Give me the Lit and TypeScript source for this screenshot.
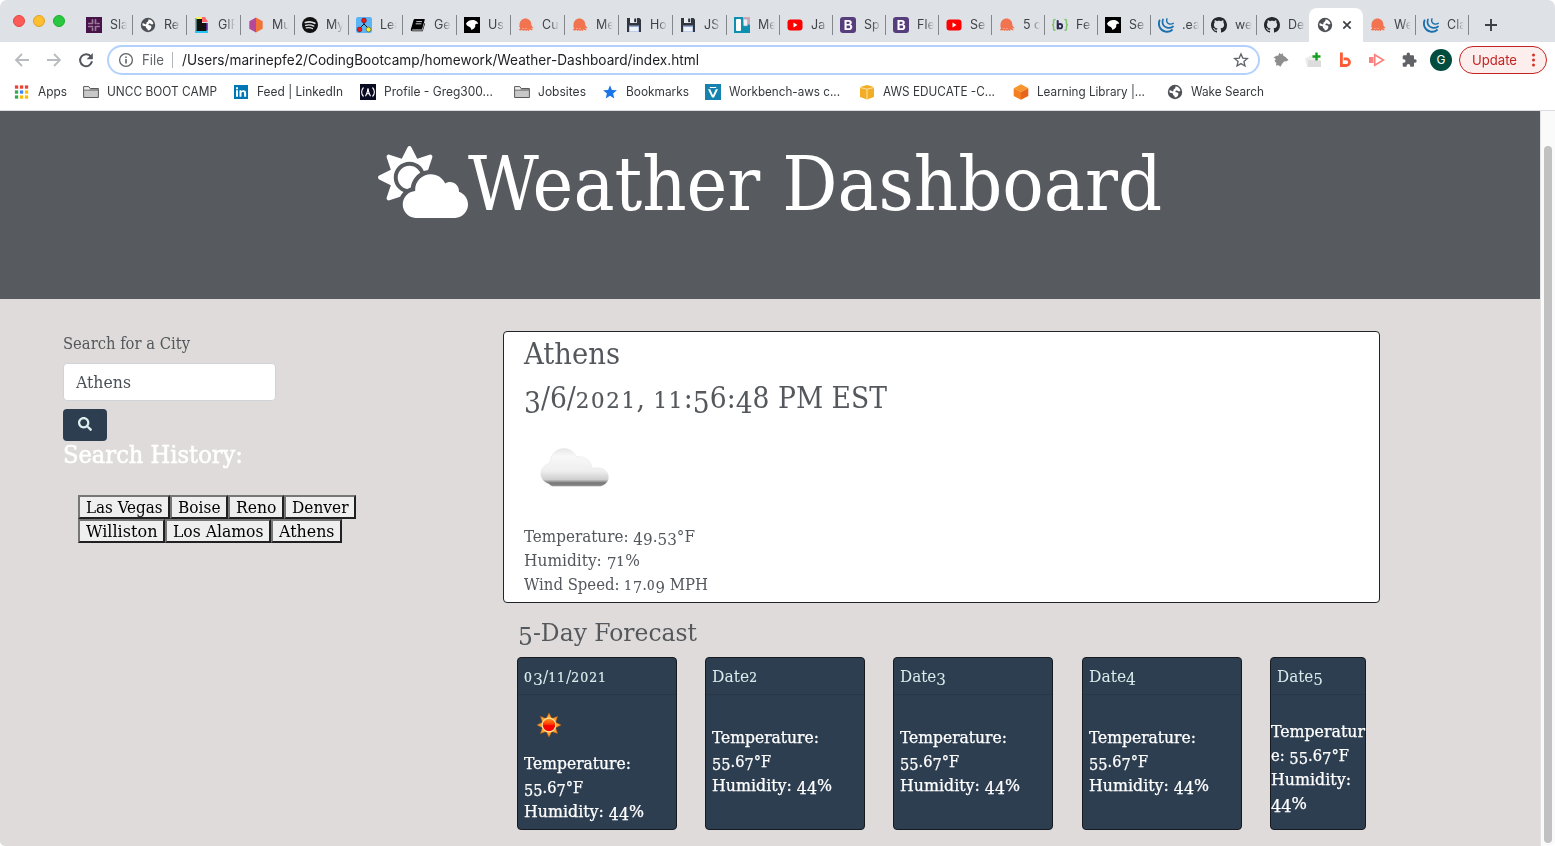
import { LitElement, html, svg, css } from "lit";
import { customElement, property } from "lit/decorators.js";

/** One line of text condensed or widened horizontally to an exact width. */
@customElement("fit-text")
class FitText extends LitElement {
  @property() text = "";
  @property({ type: Number }) w = 0;
  @property({ type: Boolean }) oldstyle = false;
  static styles = css`
    :host { display: block; white-space: pre; flex: none; }
    .run { display: inline-block; transform-origin: 0 50%; }
    .low { vertical-align: -0.18em; line-height: 0; }
    .short { font-size: 0.8em; line-height: 0; letter-spacing: 0.07em; -webkit-text-stroke: 0.2px currentColor; }
  `;
  render() {
    // old-style figures: 3 4 5 7 9 hang below the baseline, 0 1 2 stay at x-height
    const parts = this.oldstyle ? this.text.split(/([34579]+|[012]+)/).filter(Boolean) : [this.text];
    return html`<span class="run">${parts.map((p) =>
      this.oldstyle && /^[34579]/.test(p) ? html`<span class="low">${p}</span>`
        : this.oldstyle && /^[012]/.test(p) ? html`<span class="short">${p}</span>` : p)}</span>`;
  }
  updated() {
    const s = this.renderRoot.querySelector(".run") as HTMLElement;
    this.style.width = this.w + "px";
    s.style.transform = "";
    const natural = s.getBoundingClientRect().width;
    if (natural) s.style.transform = `scaleX(${this.w / natural})`;
  }
}

const line = (text: string, w: number, cls = "") =>
  html`<fit-text class=${cls} .text=${text} .w=${w}></fit-text>`;
const serif = (text: string, w: number, cls = "") =>
  html`<fit-text class=${cls} .text=${text} .w=${w} .oldstyle=${true}></fit-text>`;

const icons: Record<string, any> = {
  slack: svg`<path fill="#481349" d="M0 0h16v16H0z"/><g stroke="#9a7a9b" stroke-width="1.700" stroke-linecap="round" fill="none"><path d="M6.500 2.800v3.600M2.800 6.500h3M9.500 2.800v3.600M11.300 6.500h1.700M2.800 9.500h3.800M6.500 11.300v1.900M9.500 9.600v3.600M10.500 9.500h2.700"/></g>`,
  globe: svg`<circle cx="8" cy="8" r="7.2" fill="#4d5156"/><path fill="#fff" d="M8.300 2.600c2.400-.4 4.600 1.500 5.100 4.200-1 1-1.900.8-2.600.2-.8-.7-1.800-.5-2.200-.1-.6.6 0 1.200.8 1.300 1.300.1 2.200.7 2 2-.3 1.700-1.600 3.100-3.700 3.400l-.2-1.800c-1.300-.2-1.700-1.100-1.500-2.200L2.500 8.500c-.2-.8 0-1.700.3-2.400l2.500 1.200c1 .3 1.400-.3 1.100-1.100-.2-.7.3-1.100 1-1.300.9-.2 1.200-1.300.9-2.300z"/>`,
  gif: svg`<path fill="#fff35c" d="M1 0h6v3H1z"/><path fill="#ff6666" d="M8 0h3l3 5H8z"/><path fill="#3fd6a0" d="M1 1h1.500v13H1z"/><path fill="#9933ff" d="M12 6h2v8h-2z"/><path fill="#28c4f4" d="M1 13h13v3H1z"/><path fill="#121212" d="M2.500 2H8v4h4.500v8h-10z"/>`,
  hex: svg`<path fill="#b5489b" d="M8 .5v15L1.300 11.800V4.200z"/><path fill="#f0743a" d="M8 .5v15l6.700-3.700V4.200z"/>`,
  spotify: svg`<circle cx="8" cy="8" r="8" fill="#111"/><g stroke="#dee1e6" fill="none" stroke-linecap="round"><path stroke-width="1.700" d="M3.300 5.500c3.200-1 6.800-.7 9.500.8"/><path stroke-width="1.400" d="M3.700 8.300c2.800-.8 5.600-.5 8 .8"/><path stroke-width="1.200" d="M4.200 10.900c2.200-.6 4.400-.4 6.300.7"/></g>`,
  tree: svg`<rect width="16" height="16" rx="2" fill="#5bb4f5"/><path d="M8 3v5M8 7l-5 5M8 7l5 5" stroke="#111" stroke-width="1" fill="none"/><circle cx="8" cy="3.500" r="2.400" fill="#f01818" stroke="#511" stroke-width=".5"/><circle cx="3.500" cy="12.500" r="2.400" fill="#f01818" stroke="#511" stroke-width=".5"/><circle cx="12.500" cy="12.500" r="2.400" fill="#f6f01c" stroke="#333" stroke-width=".5"/>`,
  book: svg`<path fill="#000" d="M5 2h9c.6 0 .8.4.7.9L12 12.500H2.500c-.7 0-.7.9 0 .9h9.900l2.100-7.500.6.500-2.400 7.800H2.500c-1.500 0-2-1.200-1.500-2.500L3.500 3.200C3.800 2.400 4.200 2 5 2z"/><path d="M6.300 4.600h5.700M5.700 6.800h5.700" stroke="#dee1e6" stroke-width=".9"/>`,
  bird: svg`<path d="M0 0h16v16H0z"/><path fill="#fff" d="M2 6.500C3.500 4 6 3 8.500 3c3 0 5.500 1.800 5.700 4-1.700-.4-2.700 0-3 1 .4 1.300-.2 2.300-1.200 3.500L7.500 13c-.4-1.500-1-2.700-2.300-3.300C4 9.300 2.500 8.500 2 6.500z"/>`,
  octo: svg`<path fill="#f2734f" d="M1.500 8C1.500 4 4.200 1.500 7.500 1.500S13.200 4 13.300 7.500c.2 1.800 1.500 2.300 2.200 3.500-1 .6-2 0-2.300-.6.1 1.200 1 1.600 1.600 2.500-1.600.8-2.800-.2-3.300-1 0 1-.3 1.600-1 2l-1.200-.8-1.200.9-1.200-.9-1.300.9-1-.9c-1.500.8-3.200.5-4-.7 1-.1 1.500-.7 1.600-1.500C1.300 10.500 1.500 9 1.500 8z"/><path stroke="#fae1d8" stroke-width=".8" d="M4.500 11.500h1M7.500 11.500h1"/>`,
  disk: svg`<path fill="#32373f" d="M1 1h12.500L15 2.500V15H1z"/><path fill="#e8ebef" d="M4 1h7v5H4z"/><path fill="#222c3c" d="M8.200 1.500h2v3.700h-2z"/><path fill="#93a9d8" d="M3 8.500h10V15H3z"/><path fill="#edf1f8" d="M3.500 10h9v4.500h-9z"/>`,
  trello: svg`<path fill="#0e8fb0" d="M0 0h16v16H0z"/><path fill="#d7a7b3" d="M9 0h7v8L9 5z"/><rect x="2" y="2" width="5" height="12" rx="1" fill="#fff"/><rect x="9.300" y="2" width="4.500" height="7" rx="1" fill="#f0eef2" stroke="#68a4bb" stroke-width=".6"/>`,
  youtube: svg`<rect x=".5" y="2.500" width="15" height="11" rx="3" fill="#f00"/><path fill="#fff" d="M6.500 5.500v5L10.500 8z"/>`,
  boot: svg`<rect width="16" height="16" rx="3" fill="#563d7c"/><path fill="#fff" fill-rule="evenodd" d="M4.500 3h4.300c1.900 0 3 .9 3 2.400 0 1-.6 1.800-1.500 2.100 1.200.2 2 1.100 2 2.400 0 1.900-1.300 3.100-3.400 3.100H4.500zM6.600 4.700v2.200h1.600c1 0 1.500-.4 1.500-1.100s-.5-1.100-1.400-1.100zm0 3.700v2.900h1.900c1.100 0 1.700-.5 1.700-1.500 0-.9-.6-1.400-1.700-1.400z"/>`,
  brace: svg`<g fill="none" stroke-linecap="round"><path stroke="#7cc36a" stroke-width="1.500" d="M3 2.500c-3 0 0 4.500-2.400 5.300C3 8.600 0 13.300 3 13.300M13 2.500c3 0 0 4.500 2.400 5.300C13 8.600 16 13.300 13 13.300"/><path stroke="#2b2b50" stroke-width="2" d="M5.700 4v7.500"/><circle cx="8" cy="9.200" r="2.200" stroke="#2b2b50" stroke-width="1.800"/></g>`,
  jquery: svg`<g fill="none" stroke="#1b6fad" stroke-linecap="round"><path stroke-width="1.900" d="M1.500 3.500C-.2 8 2 13.500 7.500 14.600c2.700.5 5-.3 6.500-1.600"/><path stroke-width="1.700" d="M5 2.500c-1.400 3.500.3 7.300 4 8.200 2.500.6 4.600 0 6-1.200"/><path stroke-width="1.400" d="M9 1.800c-.9 2.300 0 4.600 2.400 5.200 1.600.4 2.800.1 3.900-.7"/></g>`,
  github: svg`<path fill="#24292e" d="M8 0C3.580 0 0 3.580 0 8c0 3.540 2.290 6.530 5.470 7.590.4.070.55-.17.55-.38 0-.19-.01-.82-.01-1.490-2.010.37-2.530-.49-2.690-.94-.09-.23-.48-.94-.82-1.130-.28-.15-.68-.52-.01-.53.63-.01 1.080.58 1.230.82.72 1.210 1.870.87 2.330.66.07-.52.28-.87.51-1.070-1.780-.2-3.640-.89-3.640-3.950 0-.87.31-1.590.82-2.150-.08-.2-.36-1.020.08-2.120 0 0 .67-.21 2.200.82.64-.18 1.320-.27 2-.27s1.360.09 2 .27c1.530-1.040 2.200-.82 2.200-.82.44 1.100.16 1.920.08 2.120.51.56.82 1.270.82 2.150 0 3.070-1.870 3.750-3.650 3.950.29.25.54.73.54 1.480 0 1.070-.01 1.930-.01 2.200 0 .21.15.46.55.38A8.010 8.010 0 0 0 16 8c0-4.420-3.580-8-8-8z"/>`,
  apps: svg`${[0, 1, 2].map((r) => [0, 1, 2].map((c) => svg`<rect x=${0.9 + c * 5} y=${1.4 + r * 5} width="3.300" height="3.300" fill=${[["#ea4335", "#ea4335", "#ea4335"], ["#34a853", "#4285f4", "#fbbc04"], ["#34a853", "#fbbc04", "#fbbc04"]][r][c]}/>`))}`,
  folder: svg`<path d="M.6 13.500V2.600h5.200l1.500 1.900h8.100v9z" fill="#c8c8c8" stroke="#5a5a5a"/><path d="M1 6h14" stroke="#5a5a5a"/><path d="M1.200 3.200h4.300L6.700 5.400H1.200z" fill="#eee"/>`,
  linkedin: svg`<rect x="1" y="1" width="14" height="14" fill="#0077b5"/><path fill="#fff" d="M3 6.300h2v6.500H3zM3 3.200h2v2H3zM6.500 6.300h1.900v.9c1-1.600 4.700-1.500 4.700 1.500v4.100h-2V9.300c0-1.900-2.600-1.700-2.600 0v3.500h-2z"/>`,
  fcc: svg`<path fill="#0a0a23" d="M0 0h16v16H0z"/><g stroke="#fff" fill="none" stroke-width="1.100"><path d="M3.500 3.500C1 6 1 10 3.500 12.500M12.500 3.500c2.500 2.500 2.500 6.500 0 9M5.500 12.300c1.200-2 2.200-4.500 2.500-8 .3 3.500 1.300 6 2.500 8M6.500 9.800h3"/></g>`,
  star: svg`<path fill="#1a73e8" d="M8 1.200l1.900 4.700 5 .4-3.800 3.200 1.200 4.900L8 11.700l-4.300 2.700 1.200-4.900L1.100 6.300l5-.4z"/>`,
  vee: svg`<path fill="#1583ad" d="M0 0h16v16H0z"/><path fill="#fff" d="M3 5.200h2.200L8 11.200l2.800-6H13l-4 8.300H7zM4.800 3h6.400v.9H4.800z"/>`,
  awsbox: svg`<path fill="#f3ad25" d="M1 3l7-2 7 2v10l-7 2.500L1 13z"/><path stroke="#fbe3ae" fill="none" d="M1 3.500l7 1.700 7-1.700M8 5.200v10"/>`,
  cube: svg`<path fill="#f8962c" d="M8 .3l7.300 3.900L8 8 .7 4.200z"/><path fill="#f57f20" d="M.7 4.200L8 8v7.800L.7 12z"/><path fill="#e8641b" d="M15.300 4.200L8 8v7.800l7.300-3.800z"/>`,
  back: svg`<path d="M15 8H2M8 2L2 8l6 6" fill="none" stroke="#b9bbbe" stroke-width="1.800"/>`,
  fwd: svg`<path d="M1 8h13M8 2l6 6-6 6" fill="none" stroke="#b9bbbe" stroke-width="1.800"/>`,
  reload: svg`<path d="M13 4.700A6 6 0 1 0 14 9.300" fill="none" stroke="#54585d" stroke-width="2"/><path d="M14.800 1v6.200H8.600z" fill="#54585d"/>`,
  info: svg`<circle cx="8" cy="8" r="6.400" fill="none" stroke="#5f6368" stroke-width="1.300"/><path fill="#5f6368" d="M7.200 7h1.600v4.600H7.200zM7.200 4.400h1.600V6H7.200z"/>`,
  starline: svg`<path fill="none" stroke="#5f6368" stroke-width="1.300" d="M8 1.900l1.800 4.200 4.600.4-3.500 3 1.100 4.500L8 11.600 4 14l1.100-4.500-3.500-3 4.600-.4z"/>`,
  wolf: svg`<path fill="#8e8e8e" d="M.5 5.500L4 3.500l1 .5L6.500.8 8 2.500 9.500 1l.8 2.700L12.500 5l3 3-2 1.200-2.500.3L9 12l-1.500 2.800-2-1.600L3 13.500l.3-2.500L1.500 9l1.300-2z"/>`,
  plusdoc: svg`<path fill="#ececec" d="M0 6.500l7-3.500 9 5v7H2z"/><path fill="#d6d6d6" d="M3 8l13 1v6H3z" opacity=".7"/><path stroke="#15a01d" stroke-width="2.400" d="M11.500.5v8M7.500 4.500h8"/>`,
  bee: svg`<path fill="none" stroke="#fa5c35" stroke-width="2.800" d="M4.400.5v13h4.800a3.300 3.300 0 0 0 0-6.600H6.600"/>`,
  play: svg`<path fill="#fb8080" d="M0 5h4.500v6H0z"/><path fill="none" stroke="#fb8080" stroke-width="1.700" d="M5.700 2.800L14.500 8l-8.800 5.200z"/>`,
  puzzle: svg`<path fill="#5f6368" d="M14 7.300h-1V4.600c0-.8-.6-1.300-1.300-1.300H9V2.300a1.700 1.700 0 0 0-3.400 0v1H3c-.8 0-1.300.6-1.300 1.300v2.600h1a1.800 1.800 0 0 1 0 3.600h-1v2.600c0 .8.6 1.300 1.300 1.300h2.600v-1a1.800 1.800 0 0 1 3.600 0v1h2.500c.8 0 1.300-.6 1.300-1.300v-2.700h1a1.700 1.700 0 0 0 0-3.400z"/>`,
  close: svg`<path stroke="#3c4043" stroke-width="1.700" d="M4.300 4.300l7.400 7.400M11.700 4.300l-7.400 7.400"/>`,
  plus: svg`<path stroke="#3c4043" stroke-width="1.900" d="M2 8h12M8 2v12"/>`,
};

const icon = (name: string, cls = "i16") =>
  html`<svg class=${cls} viewBox="0 0 16 16">${icons[name]}</svg>`;

const tabs: [string, string][] = [
  ["slack", "Sla"], ["globe", "Re"], ["gif", "GIF"], ["hex", "Mu"], ["spotify", "My"], ["tree", "Lea"],
  ["book", "Ge"], ["bird", "Us"], ["octo", "Cu"], ["octo", "Me"], ["disk", "Ho"], ["disk", "JS"],
  ["trello", "Me"], ["youtube", "Ja"], ["boot", "Sp"], ["boot", "Fle"], ["youtube", "Se"], ["octo", "5 c"],
  ["brace", "Fe"], ["bird", "Se"], ["jquery", ".ea"], ["github", "we"], ["github", "De"], ["globe", ""],
  ["octo", "We"], ["jquery", "Cla"],
];

// icon, label, label width, slot width
const bookmarks: [string, string, number, number][] = [
  ["apps", "Apps", 29, 69], ["folder", "UNCC BOOT CAMP", 110, 150], ["linkedin", "Feed | LinkedIn", 86, 127],
  ["fcc", "Profile - Greg300...", 109, 154], ["folder", "Jobsites", 48, 88], ["star", "Bookmarks", 63, 103],
  ["vee", "Workbench-aws c...", 111, 154], ["awsbox", "AWS EDUCATE -C...", 112, 154],
  ["cube", "Learning Library |...", 108, 154], ["globe", "Wake Search", 73, 100],
];

const temp: [string, number][] = [["Temperature:", 107], ["55.67°F", 59], ["Humidity: 44%", 120]];
const days: { date: string; w: number; cls: string; lines: [string, number][] }[] = [
  { date: "03/11/2021", w: 83, cls: "day sunny", lines: temp },
  { date: "Date2", w: 46, cls: "day", lines: temp },
  { date: "Date3", w: 46, cls: "day", lines: temp },
  { date: "Date4", w: 47, cls: "day", lines: temp },
  { date: "Date5", w: 46, cls: "day slim", lines: [["Temperatur", 94], ["e: 55.67°F", 78], ["Humidity:", 80], ["44%", 36]] },
];

@customElement("app-root")
class AppRoot extends LitElement {
  static styles = css`
    :host { display: block; width: 1555px; height: 846px; overflow: hidden; background: #fff; font-family: Inter, "Liberation Sans", sans-serif; }
    * { box-sizing: border-box; }
    svg { display: block; flex: none; }
    .i16 { width: 16px; height: 16px; }
    .window { display: flex; flex-direction: column; height: 846px; border-radius: 7px 7px 5px 5px; overflow: hidden; }
    .strip { height: 42px; background: #dee1e6; display: flex; }
    .lights { width: 79px; padding: 15px 0 0 13px; display: flex; gap: 8px; flex: none; }
    .light { width: 12px; height: 12px; border-radius: 50%; }
    .red { background: #fc5b57; border: 1px solid #e2463f; }
    .amber { background: #fdbe30; border: 1px solid #e0a028; }
    .green { background: #28c940; border: 1px solid #1dac2c; }
    .tab { width: 53px; height: 32px; margin-top: 9px; padding-left: 7px; display: flex; align-items: center; flex: none; position: relative; }
    .tab.wide { width: 54px; }
    .tab::after { content: ""; position: absolute; right: 0; top: 6px; width: 1px; height: 20px; background: #83868b; }
    .tab.active::after, .tab.nosep::after { display: none; }
    .tab.active { width: 54px; margin-left: -1px; background: #fff; border-radius: 8px 8px 0 0; margin-top: 8px; height: 34px; gap: 6px; padding-left: 8px; }
    .tabtext { margin-left: 8px; width: 21px; white-space: nowrap; font-size: 12.500px; line-height: 18px; color: #3f4347; -webkit-mask-image: linear-gradient(90deg, #000 8px, transparent 17px); mask-image: linear-gradient(90deg, #000 8px, transparent 17px); }
    .newtab { margin: 17px 0 0 14px; }
    .toolbar { height: 35px; padding: 1px 8px 0 14px; display: flex; align-items: center; }
    .nav { display: flex; gap: 16px; width: 93px; }
    .omni { width: 1153px; height: 30px; border: 2px solid #b3d2fb; border-radius: 15px; display: flex; align-items: center; padding: 0 9px; font-size: 14px; color: #202124; }
    .omni fit-text { margin-top: -1px; }
    .omni .file { color: #5f6368; margin-left: 8px; }
    .bar { width: 1px; height: 16px; background: #b4b6b9; margin: 0 9px 0 8px; }
    .omni .grow { flex: 1; }
    .exts { display: flex; align-items: center; gap: 16px; margin-left: 13px; }
    .avatar { width: 22px; height: 22px; border-radius: 50%; background: #004d40; color: #fff; font-size: 12px; line-height: 22px; text-align: center; margin-left: 13px; }
    .update { width: 88px; height: 28px; border: 1px solid #c5221f; border-radius: 14px; background: #fceeed; color: #c5221f; font-size: 13.500px; line-height: 26px; display: flex; align-items: center; padding-left: 12px; gap: 15px; margin-left: 7px; }
    .dots { width: 3px; height: 14px; fill: #d93025; }
    .marks { height: 34px; padding: 0 0 4px 14px; border-bottom: 1px solid #dadce0; display: flex; align-items: center; font-size: 12.500px; line-height: 18px; color: #36393c; }
    .mark { display: flex; gap: 8px; align-items: center; flex: none; }
    .view { flex: 1; display: flex; }
    .page { width: 1540px; background: #dfdbda; font-family: "DejaVu Serif Condensed", "DejaVu Serif", serif; font-stretch: condensed; font-size: 16.500px; line-height: 24px; color: #54585c; }
    .scroll { width: 15px; background: #fafafa; border-left: 1px solid #e4e4e4; padding: 35px 0 0 3px; }
    .thumb { width: 8px; height: 697px; background: #c1c1c1; border-radius: 4px; }
    .hero { height: 188px; background: #575a5f; color: #fff; display: flex; justify-content: center; align-items: flex-start; padding: 35px 1px 0 0; }
    .sun { width: 90px; height: 72px; }
    .title { font-size: 74.500px; line-height: 72px; padding-top: 3px; }
    .body { display: flex; padding: 33px 0 0 63px; }
    .side { width: 440px; }
    .input { width: 213px; height: 38px; margin-top: 7px; background: #fff; border: 1px solid #ced4da; border-radius: 4px; padding: 7px 12px; color: #495057; }
    .search { width: 44px; height: 32px; margin-top: 8px; background: #2d3e50; border-radius: 4px; display: flex; justify-content: center; padding-top: 8px; }
    .search svg { width: 14px; height: 14px; fill: #e0f0ee; }
    .hist { font-size: 24.500px; line-height: 29px; color: #fff; -webkit-text-stroke: .5px #fff; margin-top: -1px; }
    .chips { width: 290px; margin: 26px 0 0 15px; display: flex; flex-wrap: wrap; }
    .chip { height: 24px; background: #efefef; border: 2px solid; border-color: #767676 #212121 #212121 #767676; color: #000; line-height: 21px; padding-left: 6px; font-size: 16.500px; }
    .main { width: 877px; margin-top: -1px; }
    .card { height: 272px; background: #fff; border: 1px solid #212529; border-radius: 4px; padding: 5px 0 0 20px; }
    .h2 { font-size: 29px; line-height: 34px; margin-bottom: 10px; }
    .cloud { width: 100px; height: 100px; }
    .h3 { font-size: 24.500px; line-height: 29px; margin: 15px 0 10px 15px; }
    .days { display: grid; grid-template-columns: 188px 188px 189px 188px 96px; padding-left: 14px; }
    .day { width: 160px; height: 173px; background: #2d3e50; border: 1px solid #171b1f; border-radius: 4px; color: #fff; }
    .day.slim { width: 96px; }
    .day .date { height: 37px; border-bottom: 1px solid #283747; padding: 7px 0 0 6px; color: #d9eceb; }
    .day .info { padding: 31px 0 0 6px; -webkit-text-stroke: .25px #fff; }
    .day.sunny .info { padding-top: 5px; }
    .day.slim .info { padding: 25px 0 0; }
    .sunimg { width: 50px; height: 50px; margin-bottom: 2px; }
  `;

  renderTab([ic, t]: [string, string], i: number) {
    if (!t) return html`<div class="tab active">${icon(ic)}${icon("close")}</div>`;
    return html`<div class="tab ${i < 12 ? "wide" : ""} ${i === 22 ? "nosep" : ""}">${icon(ic)}<span class="tabtext">${t}</span></div>`;
  }

  render() {
    const rays = Array.from({ length: 8 }, (_, i) => svg`<path d="M25 13l3 6h-6z" fill="#fda52a" stroke="#c85a12" stroke-width=".5" transform="rotate(${i * 45} 25 25)"/>`);
    return html`<div class="window">
      <div class="strip">
        <div class="lights"><div class="light red"></div><div class="light amber"></div><div class="light green"></div></div>
        ${tabs.map((t, i) => this.renderTab(t, i))}
        <div class="newtab">${icon("plus")}</div>
      </div>
      <div class="toolbar">
        <div class="nav">${icon("back")}${icon("fwd")}${icon("reload")}</div>
        <div class="omni">
          ${icon("info")}${line("File", 22, "file")}<div class="bar"></div>
          ${line("/Users/marinepfe2/CodingBootcamp/homework/Weather-Dashboard/index.html", 517)}
          <div class="grow"></div>${icon("starline")}
        </div>
        <div class="exts">${icon("wolf")}${icon("plusdoc")}${icon("bee")}${icon("play")}${icon("puzzle")}</div>
        <div class="avatar">G</div>
        <div class="update">${line("Update", 45)}<svg class="dots" viewBox="0 0 3 14"><circle cx="1.500" cy="2" r="1.500"/><circle cx="1.500" cy="7" r="1.500"/><circle cx="1.500" cy="12" r="1.500"/></svg></div>
      </div>
      <div class="marks">
        ${bookmarks.map(([ic, t, w, slot]) => html`<div class="mark" style="width:${slot}px">${icon(ic)}${line(t, w)}</div>`)}
      </div>
      <div class="view">
        <div class="page">
          <div class="hero">
            <svg class="sun" viewBox="0 0 640 512"><path fill="#fff" d="M575.2 325.7c.2-1.9.8-3.7.8-5.6 0-35.3-28.7-64-64-64-12.6 0-24.2 3.8-34.1 10-17.6-38.8-56.5-66-101.9-66-61.8 0-112 50.1-112 112 0 3 .7 5.800.9 8.700-49.6 3.700-88.900 44.700-88.900 95.300 0 53 43 96 96 96h272c53 0 96-43 96-96 0-42.100-27.200-77.400-64.800-90.400zm-430.400-22.600c-43.700-43.700-43.700-114.700 0-158.300 43.700-43.700 114.700-43.700 158.400 0 9.700 9.700 16.900 20.900 22.300 32.700 9.800-3.700 20.100-6 30.700-7.500L386 81.100c4-11.900-7.300-23.100-19.200-19.200L279 91.200 237.500 8.400C232-2.800 216-2.800 210.400 8.400L169 91.200 81.100 61.900C69.300 58 58 69.300 61.900 81.100l29.300 87.800-82.800 41.500c-11.200 5.600-11.200 21.500 0 27.100l82.800 41.400-29.300 87.800c-4 11.900 7.300 23.100 19.200 19.200l76.100-25.300c6.100-12.400 14-23.700 23.600-33.500-13.100-5.400-25.400-13.400-36-24zm-4.800-79.200c0 40.800 29.300 74.800 67.900 82.300 8-4.700 16.300-8.800 25.200-11.700 5.400-44.300 31-82.500 67.400-105C287.300 160.400 258 140 224 140c-46.300 0-84 37.600-84 83.900z"/></svg>
            ${line("Weather Dashboard", 694, "title")}
          </div>
          <div class="body">
            <div class="side">
              ${line("Search for a City", 127)}
              <div class="input">${line("Athens", 55)}</div>
              <div class="search"><svg viewBox="0 0 512 512"><path d="M505 442.700L405.300 343c-4.500-4.500-10.600-7-17-7H372c27.600-35.300 44-79.700 44-128C416 93.100 322.900 0 208 0S0 93.100 0 208s93.100 208 208 208c48.300 0 92.700-16.400 128-44v16.300c0 6.400 2.500 12.500 7 17l99.700 99.700c9.400 9.400 24.600 9.400 33.900 0l28.300-28.300c9.400-9.400 9.400-24.600.1-34zM208 336c-70.700 0-128-57.200-128-128 0-70.700 57.200-128 128-128 70.700 0 128 57.200 128 128 0 70.700-57.200 128-128 128z"/></svg></div>
              ${line("Search History:", 180, "hist")}
              <div class="chips">
                ${([["Las Vegas", 92], ["Boise", 58], ["Reno", 56], ["Denver", 72], ["Williston", 87], ["Los Alamos", 106], ["Athens", 71]] as [string, number][]).map(
                  ([t, w]) => html`<div class="chip" style="width:${w}px">${line(t, w - 15.5)}</div>`
                )}
              </div>
            </div>
            <div class="main">
              <div class="card">
                ${serif("Athens", 96, "h2")}
                ${serif("3/6/2021, 11:56:48 PM EST", 363, "h2")}
                <svg class="cloud" viewBox="0 13 100 100">
                  <defs>
                    <linearGradient id="c" x1="0" y1="0" x2="0" y2="1"><stop offset="0" stop-color="#e6e6e6"/><stop offset=".2" stop-color="#f8f8f8"/><stop offset=".6" stop-color="#eeeeee"/><stop offset=".82" stop-color="#cfcfcf"/><stop offset=".91" stop-color="#777"/><stop offset="1" stop-color="#8a8a8a"/></linearGradient>
                    <filter id="soft" x="-10%" y="-10%" width="120%" height="120%"><feGaussianBlur stdDeviation=".7"/></filter>
                  </defs>
                  <path filter="url(#soft)" fill="url(#c)" stroke="#dedede" stroke-width=".4" d="M25 72C19 70 16 65 17 60c1-5 4-7 9-9 0-8 6-14.500 14-14.500 5 0 10 3 12.500 8.500 6-1.500 14 1.500 16 11.500 7-2.500 16 1 16 9 0 4-3 7.500-8 8.800H30c-2 0-4-.8-5-2.300z"/>
                </svg>
                ${serif("Temperature: 49.53°F", 171)}
                ${serif("Humidity: 71%", 116)}
                ${serif("Wind Speed: 17.09 MPH", 184)}
              </div>
              ${serif("5-Day Forecast", 179, "h3")}
              <div class="days">
                ${days.map((d, i) => html`<div class=${d.cls}>
                  <div class="date">${serif(d.date, d.w)}</div>
                  <div class="info">
                    ${i === 0 ? html`<svg class="sunimg" viewBox="0 0 50 50"><defs><linearGradient id="s" x1="0" y1="0" x2="0" y2="1"><stop offset="0" stop-color="#ff9a1c"/><stop offset=".45" stop-color="#ff3a05"/><stop offset=".55" stop-color="#f60000"/></linearGradient></defs>${rays}<circle cx="25" cy="25" r="6.800" fill="url(#s)" stroke="#ffe2a0" stroke-width="1.200"/></svg>` : ""}
                    ${d.lines.map(([t, w]) => serif(t, w))}
                  </div>
                </div>`)}
              </div>
            </div>
          </div>
        </div>
        <div class="scroll"><div class="thumb"></div></div>
      </div>
    </div>`;
  }
}
